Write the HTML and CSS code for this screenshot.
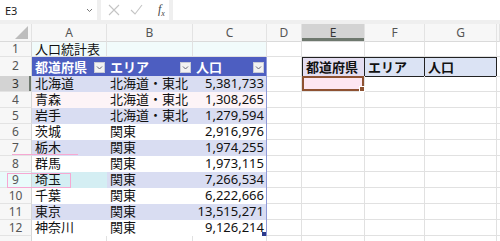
FILE: index.html
```html
<!DOCTYPE html>
<html lang="ja">
<head>
    <meta charset="UTF-8">
    <title>人口統計表</title>
    <link rel="stylesheet" href="styles.css">
</head>
<body>

<div id="formulaBar">
    <div class="namebox">
        <span>E3</span>
        <svg width="7" height="5" viewBox="0 0 7 5"><path d="M1 1 L3.5 3.5 L6 1" fill="none" stroke="#777" stroke-width="1"/></svg>
    </div>
    <div class="fbuttons">
        <svg width="12" height="12" viewBox="0 0 12 12"><path d="M1 1 L11 11 M11 1 L1 11" stroke="#c4c4c4" stroke-width="1.1"/></svg>
        <svg width="13" height="12" viewBox="0 0 13 12"><path d="M1 6 L5 10 L12 1" fill="none" stroke="#c4c4c4" stroke-width="1.1"/></svg>
        <span class="fx">f<sub>x</sub></span>
    </div>
    <div class="formula"></div>
</div>

<div id="sheet">
    <div class="row colhead">
        <div class="corner"><span class="tri"></span></div>
        <div>A</div><div>B</div><div>C</div><div>D</div>
        <div class="sel">E</div><div>F</div><div>G</div><div></div>
    </div>

    <div class="row r1">
        <div class="rh">1</div>
        <div class="c cyan">人口統計表</div><div class="c cyan"></div><div class="c cyan"></div>
        <div class="c"></div><div class="c"></div><div class="c"></div><div class="c"></div><div class="c"></div>
    </div>

    <div class="row r2">
        <div class="rh">2</div>
        <div class="th">都道府県<span class="dd"></span></div>
        <div class="th">エリア<span class="dd"></span></div>
        <div class="th last">人口<span class="dd"></span></div>
        <div class="c"></div>
        <div class="c kh first">都道府県</div>
        <div class="c kh">エリア</div>
        <div class="c kh">人口</div>
        <div class="c"></div>
    </div>

    <div class="row band">
        <div class="rh sel">3</div>
        <div class="t">北海道</div><div class="t">北海道・東北</div><div class="t num">5,381,733</div>
        <div class="c"></div><div class="c active"></div><div class="c"></div><div class="c"></div><div class="c"></div>
    </div>
    <div class="row plain pinkish">
        <div class="rh">4</div>
        <div class="t">青森</div><div class="t">北海道・東北</div><div class="t num">1,308,265</div>
        <div class="c"></div><div class="c"></div><div class="c"></div><div class="c"></div><div class="c"></div>
    </div>
    <div class="row band">
        <div class="rh">5</div>
        <div class="t">岩手</div><div class="t">北海道・東北</div><div class="t num">1,279,594</div>
        <div class="c"></div><div class="c"></div><div class="c"></div><div class="c"></div><div class="c"></div>
    </div>
    <div class="row plain">
        <div class="rh">6</div>
        <div class="t">茨城</div><div class="t">関東</div><div class="t num">2,916,976</div>
        <div class="c"></div><div class="c"></div><div class="c"></div><div class="c"></div><div class="c"></div>
    </div>
    <div class="row band">
        <div class="rh">7</div>
        <div class="t ghost-line">栃木</div><div class="t">関東</div><div class="t num">1,974,255</div>
        <div class="c"></div><div class="c"></div><div class="c"></div><div class="c"></div><div class="c"></div>
    </div>
    <div class="row plain">
        <div class="rh">8</div>
        <div class="t">群馬</div><div class="t">関東</div><div class="t num">1,973,115</div>
        <div class="c"></div><div class="c"></div><div class="c"></div><div class="c"></div><div class="c"></div>
    </div>
    <div class="row band">
        <div class="rh ghost-box">9</div>
        <div class="t ghost-fill">埼玉</div><div class="t">関東</div><div class="t num">7,266,534</div>
        <div class="c"></div><div class="c"></div><div class="c"></div><div class="c"></div><div class="c"></div>
    </div>
    <div class="row plain">
        <div class="rh">10</div>
        <div class="t">千葉</div><div class="t">関東</div><div class="t num">6,222,666</div>
        <div class="c"></div><div class="c"></div><div class="c"></div><div class="c"></div><div class="c"></div>
    </div>
    <div class="row band">
        <div class="rh">11</div>
        <div class="t">東京</div><div class="t">関東</div><div class="t num">13,515,271</div>
        <div class="c"></div><div class="c"></div><div class="c"></div><div class="c"></div><div class="c"></div>
    </div>
    <div class="row plain">
        <div class="rh">12</div>
        <div class="t">神奈川</div><div class="t">関東</div><div class="t num end">9,126,214</div>
        <div class="c"></div><div class="c"></div><div class="c"></div><div class="c"></div><div class="c"></div>
    </div>
    <div class="row">
        <div class="rh"></div>
        <div class="c"></div><div class="c"></div><div class="c"></div>
        <div class="c"></div><div class="c"></div><div class="c"></div><div class="c"></div><div class="c"></div>
    </div>
</div>

</body>
</html>
```

FILE: styles.css
```css
body {
    margin: 0;
    height: 241px;
    overflow: hidden;
    background: #fff;
    font-family: 'Noto Sans', 'Noto Sans CJK JP', sans-serif;
    color: #111;
}

#formulaBar {
    display: flex;
    gap: 4px;
    height: 20px;
    padding-bottom: 4px;
    background: #efefef;
}

.namebox {
    width: 97px;
    background: #fff;
    display: flex;
    align-items: center;
    justify-content: space-between;
    padding: 0 4px 0 5px;
    box-sizing: border-box;
    font-size: 11px;
    color: #222;
}

.fbuttons {
    width: 68px;
    background: #fff;
    display: flex;
    align-items: center;
    gap: 10px;
    padding-left: 7px;
    box-sizing: border-box;
}

.fx {
    font-family: 'Liberation Serif', serif;
    font-style: italic;
    font-size: 12px;
    color: #444;
    margin-left: 5px;
}

.fx sub {
    font-size: 8px;
}

.formula {
    flex: 1;
    background: #fff;
}

#sheet {
    font-size: 13px;
}

.row {
    display: grid;
    grid-template-columns: 32px 75px 86px 74px 35px 63px 60px 72px 1fr;
    height: 16px;
}

.row > div {
    box-sizing: border-box;
    white-space: nowrap;
    line-height: 15px;
}

.colhead {
    height: 18px;
}

.colhead > div {
    background: #f7f7f7;
    border-right: 1px solid #e3e3e3;
    border-bottom: 1px solid #dadada;
    text-align: center;
    font-size: 12px;
    line-height: 17px;
    color: #555;
}

.colhead .sel {
    background: #d3d3d3;
    color: #333;
    box-shadow: inset 0 -3px #6e786e;
}

.corner {
    position: relative;
}

.tri {
    position: absolute;
    right: 3px;
    bottom: 2px;
    width: 0;
    height: 0;
    border-left: 13px solid transparent;
    border-bottom: 13px solid #bdbdbd;
}

.r1 {
    height: 15px;
}

.r1 > div {
    line-height: 14px;
}

.r2 {
    height: 19px;
}

.r2 > div {
    line-height: 18px;
}

.rh {
    background: #f7f7f7;
    border-right: 1px solid #d6d6d6;
    border-bottom: 1px solid #e3e3e3;
    text-align: center;
    font-size: 12px;
    color: #555;
}

.rh.sel {
    background: #d3d3d3;
    color: #333;
    box-shadow: inset -2px 0 #6e786e;
}

.c {
    border-right: 1px solid #e1e1e1;
    border-bottom: 1px solid #e1e1e1;
    padding: 0 3px;
}

.c.cyan {
    background: #f1fbfb;
}

.th {
    background: #4d5ec1;
    color: #fff;
    font-weight: bold;
    padding: 0 2px 0 3px;
    display: flex;
    align-items: center;
    justify-content: space-between;
}

.th.last {
    border-right: 1px solid #8f9ad8;
}

.dd {
    width: 11px;
    height: 11px;
    box-sizing: border-box;
    background: #f2f2f2 url("data:image/svg+xml,%3Csvg xmlns='http://www.w3.org/2000/svg' width='9' height='9'%3E%3Cpath d='M2 3.5 L4.5 6 L7 3.5' fill='none' stroke='%23667' stroke-width='1'/%3E%3C/svg%3E") center no-repeat;
    border: 1px solid #c9cbd6;
}

.kh {
    background: #dbe3f4;
    font-weight: bold;
    border-top: 1px solid #222;
    border-bottom-color: #222;
    border-right-color: #222;
}

.kh.first {
    border-left: 1px solid #222;
    background: #e4def1;
}

.t {
    padding: 0 3px;
}

.band .t {
    background: #d9ddf2;
}

.plain .t {
    background: #fff;
}

.pinkish .t {
    background: #fdf4f7;
}

.t.num {
    text-align: right;
    padding-right: 2px;
    border-right: 1px solid #8f9ad8;
}

.t.end {
    position: relative;
}

.t.end::after {
    content: '';
    position: absolute;
    right: 0;
    bottom: 0;
    width: 4px;
    height: 4px;
    background: #2b3a8c;
}

.active {
    position: relative;
    background: #fde7f2;
    box-shadow: inset 0 0 0 2px #8e5232;
}

.active::after {
    content: '';
    position: absolute;
    right: -1px;
    bottom: -1px;
    width: 4px;
    height: 4px;
    background: #8e5232;
    border: 1px solid #fff;
}

.ghost-line {
    position: relative;
}

.ghost-line::after {
    content: '';
    position: absolute;
    left: -20px;
    right: 29px;
    bottom: 1px;
    height: 1px;
    background: #f6a8d2;
}

.ghost-box {
    position: relative;
    background: #eafbfb;
}

.band .t.ghost-fill {
    position: relative;
    background: #d4eef3;
}

.ghost-fill::before {
    content: '';
    position: absolute;
    left: -25px;
    top: 1px;
    width: 62px;
    height: 13px;
    border: 1px solid #f6a8d2;
}
```
